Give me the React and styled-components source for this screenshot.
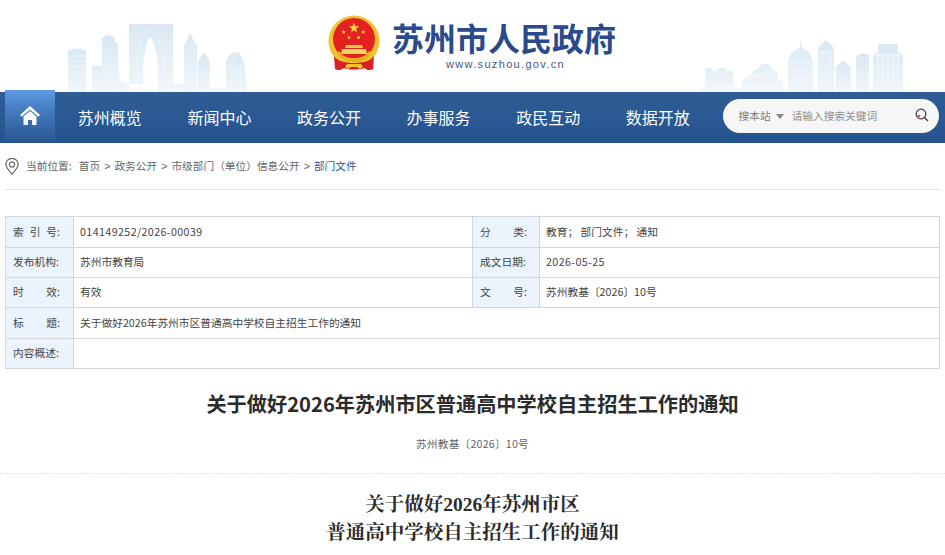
import React from "react";
import styled, { createGlobalStyle } from "styled-components";

const Global = createGlobalStyle`
  html, body { margin: 0; padding: 0; background: #fff; }
  body { font-family: "Noto Sans CJK SC", "Liberation Sans", sans-serif; overflow: hidden; }
`;
const Page = styled.div`width: 945px; height: 555px; overflow: hidden; display: flex; flex-direction: column;`;
const Header = styled.header`height: 92px; display: flex; padding-left: 68px; box-sizing: border-box;`;
const Skyline = styled.svg`align-self: flex-end; display: block; flex: none;`;
const Logo = styled.div`margin: 15px 84px 0 80px; width: 288px; flex: none; display: flex; gap: 12px;`;
const LogoText = styled.div`display: flex; flex-direction: column; align-items: center; padding-top: 4px;`;
const LogoName = styled.div`font-size: 32px; line-height: 36px; font-weight: 700; color: #2a4a8c; white-space: nowrap; width: 224px;`;
const LogoUrl = styled.div`font-family: "Liberation Sans", sans-serif; font-size: 11px; line-height: 12px; letter-spacing: 1.33px; color: #44597f; margin-top: 3px; padding-left: 3px; white-space: nowrap;`;
const Nav = styled.nav`height: 51px; padding-left: 5px; display: flex; align-items: stretch; background: linear-gradient(180deg, #2f5e96 0%, #24538f 100%);`;
const HomeTab = styled.a`width: 50px; height: 53px; margin-top: -2px; flex: none; display: flex; align-items: center; justify-content: center; padding-bottom: 2px; box-sizing: border-box; background: linear-gradient(180deg, #5c9ae2 0%, #4277ba 45%, #28558f 100%);`;
const NavItem = styled.a`width: 109.6px; flex: none; display: flex; align-items: center; justify-content: center; color: #fff; font-size: 16px; white-space: nowrap; padding-bottom: 1px; box-sizing: border-box;`;
const Search = styled.div`width: 216px; height: 34px; margin: 7px 0 0 10px; border-radius: 17px; background: #f6f6f6; display: flex; align-items: center; padding: 0 10px 2px 16px; box-sizing: border-box; font-size: 10.7px; color: #888;`;
const Scope = styled.span`color: #777; margin-right: 5px;`;
const Caret = styled.i`width: 0; height: 0; border-left: 4px solid transparent; border-right: 4px solid transparent; border-top: 5px solid #888; margin: 2px 8px 0 0;`;
const Placeholder = styled.span`flex: 1; color: #8d8d8d;`;
const Crumbs = styled.div`height: 46px; margin: 0 5px; border-bottom: 1px solid #e4e4e4; display: flex; align-items: center; font-size: 10.7px; color: #666; white-space: nowrap; padding-bottom: 0;`;
const CrumbText = styled.span`margin: 0 0 2px 7px;`;
const CrumbHead = styled.span`margin-right: 7px;`;
const Sep = styled.span`font-family: "Liberation Sans", sans-serif; margin: 0 4px;`;
const Current = styled.span`color: #1f5a96;`;
const Meta = styled.table`margin: 26px 5px 0; width: 935px; border-collapse: collapse; table-layout: fixed; font-size: 10.72px; color: #444;`;
const Row = styled.tr`height: ${p => p.$h}px;`;
const Label = styled.th`box-sizing: border-box; border: 1px solid #d6d6d6; background: #ebf4fc; font-weight: 400; padding: 0 0 2px 7px; color: #444;`;
const Spread = styled.span`display: flex; width: 47px; justify-content: space-between; white-space: nowrap;`;
const Value = styled.td`box-sizing: border-box; border: 1px solid #d6d6d6; padding: 0 6px 2px; white-space: nowrap;`;
const Digits = styled.span`letter-spacing: .38px;`;
const Title = styled.h1`margin: 20px 0 0; text-align: center; font-size: 20.2px; line-height: 30px; font-weight: 700; color: #2b2b2b;`;
const DocNo = styled.div`margin-top: 17px; text-align: center; font-size: 10.7px; letter-spacing: .2px; line-height: 16px; color: #666;`;
const Dashed = styled.div`margin-top: 21px; border-top: 1px dashed #e4e4e4;`;
const Body = styled.h2`margin: 17px 0 0; text-align: center; font-family: "Liberation Serif", "Noto Serif CJK SC", "Noto Sans CJK SC", serif; font-size: 19.5px; line-height: 28px; font-weight: 700; color: #2b2b2b;`;

const Star = ({ x, y, r }) => {
  const pts = [];
  for (let i = 0; i < 10; i++) {
    const a = -Math.PI / 2 + (i * Math.PI) / 5;
    const d = i % 2 ? r * 0.4 : r;
    pts.push(`${(x + d * Math.cos(a)).toFixed(2)},${(y + d * Math.sin(a)).toFixed(2)}`);
  }
  return <polygon points={pts.join(" ")} fill="#ffd93a" />;
};
const Emblem = () => (
  <svg width="52" height="57" viewBox="0 0 52 57" style={{ flex: "none" }}>
    <circle cx="26" cy="26" r="25.5" fill="#f2c230" />
    <circle cx="26" cy="24" r="21" fill="#e3211f" />
    <Star x={26} y={13} r={5.5} />
    <Star x={15.7} y={17} r={2.4} />
    <Star x={35.3} y={17} r={2.4} />
    <Star x={21} y={22.500} r={2.2} />
    <Star x={30.500} y={22.500} r={2.2} />
    <path d="M18 30h16l1 3H17z" fill="#f5c842" />
    <path d="M14 34h24l1 5H13z" fill="#f5d35c" />
    <path d="M11 36c4 6 9 7 15 7s11-1 15-7l2 2c-4 8-10 9-17 9S13 46 9 38z" fill="#e9b21f" />
    <path d="M6 41c4 5 10 7 20 7s16-2 20-7l-1 13c-4 2-6 1-9-1-3 2-17 2-20 0-3 2-5 3-9 1z" fill="#db1f26" />
    <path d="M19 49h14l2 3-3 2-3-2h-6l-3 2-3-2z" fill="#f2c230" />
  </svg>
);
const Sky = ({ id, width, height, viewBox, children }) => (
  <Skyline width={width} height={height} viewBox={viewBox}>
    <defs>
      <linearGradient id={id} x1="0" y1="0" x2="0" y2="1">
        <stop offset="0" stopColor="#d9e8f3" />
        <stop offset="1" stopColor="#f1f7fb" />
      </linearGradient>
    </defs>
    <g fill={`url(#${id})`}>{children}</g>
  </Skyline>
);
const HomeIcon = () => (
  <svg width="20" height="19" viewBox="0 0 20 19" fill="#fff">
    <path d="M10 0 20 9l-1.6 1.8L10 3.4 1.6 10.8 0 9z" />
    <path d="M3.5 10.5 10 5l6.5 5.5V19h-4.4v-5H7.9v5H3.500z" />
  </svg>
);
const PinIcon = () => (
  <svg width="14" height="17" viewBox="0 0 14 17" fill="none" stroke="#666" strokeWidth="1.2">
    <path d="M7 16C3.500 12 .8 9.500.8 6.500a6.200 6.200 0 0 1 12.400 0C13.200 9.500 10.500 12 7 16z" />
    <circle cx="7" cy="6.500" r="2.600" />
  </svg>
);
const SearchIcon = () => (
  <svg width="14" height="14" viewBox="0 0 14 14" fill="none">
    <circle cx="6" cy="6" r="4.800" stroke="#444" strokeWidth="1.300" />
    <path d="m9.500 9.500 3.500 3.500" stroke="#444" strokeWidth="1.500" />
    <circle cx="4" cy="8" r="1.300" fill="#d9534f" />
  </svg>
);

const navItems = ["苏州概览", "新闻中心", "政务公开", "办事服务", "政民互动", "数据开放"];
const Spaced = ({ parts }) => <Spread>{parts.map(p => <span key={p}>{p}</span>)}</Spread>;

export default function App() {
  return (
    <Page>
      <Global />
      <Header>
        <Sky id="skyL" width="180" height="68" viewBox="0 0 180 68">
          <path d="M0 68V27q9-5 18 0v41z" />
          <path d="M24 68V42h11v26z" opacity=".8" />
          <path d="M34 68V14q6-6 13 0v5h3l1 30 4 19z" />
          <path d="M51 68v-8l5-2 5 2v8zM105 68v-8h11v8zM142 68v-4h16v4z" opacity=".6" />
          <path fillRule="evenodd" d="M61 68V0h44v68H90V48Q89 20 82 13 76 20 75 48v12H61z" />
          <path d="M116 68V21l2-3 4-10 4 10 3 3v47z" />
          <path d="M130 68V37l6-9 6 9v31z" />
          <path d="M158 68V38q2-10 12-10 8 6 9 40z" />
          <g fill="none" stroke="#fff" strokeWidth=".6" opacity=".8">
            <path d="M0 32h18M0 37h18M0 43h18M0 50h18" />
            <path d="M69 60V40Q71 12 82 4q12 8 14 36v28" />
            <path d="M164 68V40q1-8 6-12M173 68V40" />
          </g>
        </Sky>
        <Logo>
          <Emblem />
          <LogoText>
            <LogoName>苏州市人民政府</LogoName>
            <LogoUrl>www.suzhou.gov.cn</LogoUrl>
          </LogoText>
        </Logo>
        <Sky id="skyR" width="205" height="54" viewBox="0 0 205 54">
          <path d="M0 54v-4l5-2V30h7v3h6v-3h8v3h7v16l10 1v4z" opacity=".75" />
          <path d="M42 54V42l8-4 4-6 4-1 4-5h7l3 5 5 3v7l6 3v10z" opacity=".75" />
          <path d="M88 54V24q2-11 12-14l1-10 1 10q9 3 11 14v30z" />
          <path d="M118 54V10l8-8 8 8v44z" />
          <path d="M136 54V29l7-7 8 7v25z" />
          <path d="M156 54V18l7-3 6 2v37z" />
          <path d="M173 54V17l5-3V6h20v8l5 3v37z" />
          <g fill="none" stroke="#fff" strokeWidth=".7" opacity=".85">
            <path d="M88 24h25M94 24v30M107 24v30M94 33h13M94 42h13" />
            <path d="M118 14h16M122 14v40M130 14v40" />
            <path d="M178 17v37M183 17v37M188 17v37M193 17v37M198 17v37M173 17h30" />
            <path d="M48 38h30" />
          </g>
        </Sky>
      </Header>
      <Nav>
        <HomeTab><HomeIcon /></HomeTab>
        {navItems.map(t => <NavItem key={t}>{t}</NavItem>)}
        <Search>
          <Scope>搜本站</Scope>
          <Caret />
          <Placeholder>请输入搜索关键词</Placeholder>
          <SearchIcon />
        </Search>
      </Nav>
      <Crumbs>
        <PinIcon />
        <CrumbText><CrumbHead>当前位置:</CrumbHead>首页<Sep>&gt;</Sep>政务公开<Sep>&gt;</Sep>市级部门（单位）信息公开<Sep>&gt;</Sep><Current>部门文件</Current></CrumbText>
      </Crumbs>
      <Meta>
        <colgroup>
          <col style={{ width: 68 }} />
          <col style={{ width: 399 }} />
          <col style={{ width: 67 }} />
          <col />
        </colgroup>
        <tbody>
          <Row $h={31}>
            <Label><Spaced parts={["索", "引", "号:"]} /></Label>
            <Value><Digits>014149252/2026-00039</Digits></Value>
            <Label><Spaced parts={["分", "类:"]} /></Label>
            <Value>教育； 部门文件； 通知</Value>
          </Row>
          <Row $h={30}>
            <Label><Spaced parts={["发布机构:"]} /></Label>
            <Value>苏州市教育局</Value>
            <Label><Spaced parts={["成文日期:"]} /></Label>
            <Value><Digits>2026-05-25</Digits></Value>
          </Row>
          <Row $h={30}>
            <Label><Spaced parts={["时", "效:"]} /></Label>
            <Value>有效</Value>
            <Label><Spaced parts={["文", "号:"]} /></Label>
            <Value>苏州教基〔2026〕10号</Value>
          </Row>
          <Row $h={31}>
            <Label><Spaced parts={["标", "题:"]} /></Label>
            <Value colSpan={3}>关于做好2026年苏州市区普通高中学校自主招生工作的通知</Value>
          </Row>
          <Row $h={30}>
            <Label><Spaced parts={["内容概述:"]} /></Label>
            <Value colSpan={3} />
          </Row>
        </tbody>
      </Meta>
      <Title>关于做好2026年苏州市区普通高中学校自主招生工作的通知</Title>
      <DocNo>苏州教基〔2026〕10号</DocNo>
      <Dashed />
      <Body>关于做好2026年苏州市区<br />普通高中学校自主招生工作的通知</Body>
    </Page>
  );
}
